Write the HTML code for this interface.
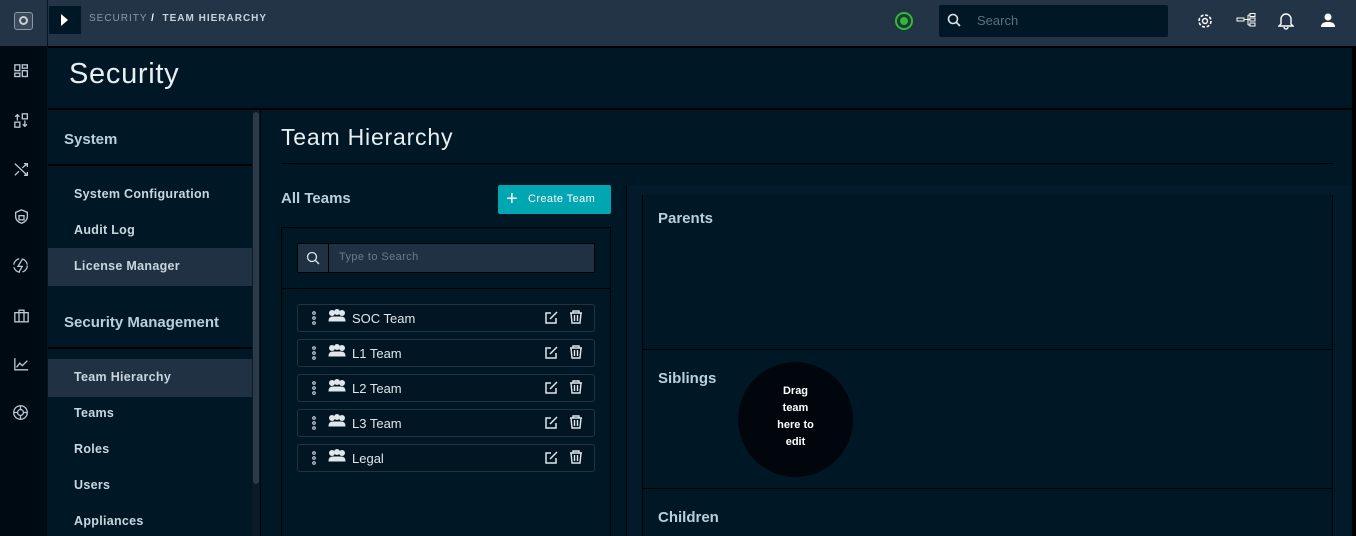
<!DOCTYPE html>
<html><head><style>
*{margin:0;padding:0;box-sizing:border-box}
body{width:1356px;height:536px;overflow:hidden;background:#001826;font-family:"Liberation Sans",sans-serif;position:relative;color:#dfe6ec}
.abs{position:absolute}
.rail{left:0;top:0;width:47px;height:536px;background:#000a12}
.top{left:48px;top:0;width:1308px;height:46px;background:#223446}
.topl{left:0;top:0;width:47px;height:46px;background:#223446}
.nav{left:48px;top:110px;width:204px;height:426px;background:#001826}
.navi{position:absolute;left:26px;font-size:12.5px;font-weight:bold;color:#c9d6e0;letter-spacing:.3px}
.hd{position:absolute;left:16px;font-size:15px;font-weight:bold;color:#b9cfe0}
.sel{position:absolute;left:0;width:204px;height:38px;background:#1f3142}
.row{position:absolute;left:297px;width:298px;height:28px;border:1px solid #22323f;border-radius:3px;background:#021522}
.row span{position:absolute;left:54px;top:6px;font-size:13px;color:#e0e6ea}
.sec{position:absolute;left:658px;font-size:15px;font-weight:bold;color:#b9cfe0}
.ri{position:absolute;left:14px}
</style></head><body>
<div class="abs rail"></div>
<div class="abs topl"></div>
<div class="abs" style="left:14px;top:12px;width:19px;height:18px;border:1.5px solid #8a9aa8;border-radius:3px;background:#3a4a58"><div style="position:absolute;left:3.5px;top:3px;width:9px;height:9px;border:2px solid #c8d0d8;border-radius:50%"></div></div>
<div class="abs top"></div>
<div class="abs" style="left:49px;top:6px;width:32px;height:28px;background:#001826"><div style="position:absolute;left:12px;top:8px;border-left:7px solid #fff;border-top:6px solid transparent;border-bottom:6px solid transparent"></div></div>
<div class="abs" style="left:89px;top:13px;font-size:10px;letter-spacing:1px;color:#8a9aaa">SECURITY <b style="color:#fff">/</b>&nbsp; <b style="color:#c8d2dc">TEAM HIERARCHY</b></div>
<div class="abs" style="left:895px;top:12px;width:18px;height:18px;border:2px solid #2bbd2b;border-radius:50%"><div style="position:absolute;left:3px;top:3px;width:8px;height:8px;background:#2bbd2b;border-radius:50%"></div></div>
<div class="abs" style="left:939px;top:5px;width:229px;height:32px;background:#001826;border-radius:2px"></div>
<svg class="abs" style="left:947px;top:13px" width="14" height="14"><circle cx="6" cy="6" r="4.5" stroke="#dfe6ec" stroke-width="1.6" fill="none"/><path d="M9.5 9.5L13 13" stroke="#dfe6ec" stroke-width="1.6"/></svg>
<div class="abs" style="left:977px;top:13px;font-size:13px;color:#5d6f80">Search</div>
<svg class="abs" style="left:1196px;top:12px" width="18" height="18" viewBox="0 0 18 18"><circle cx="9" cy="9" r="6" stroke="#fff" stroke-width="1.6" fill="none" stroke-dasharray="3 1.7"/><circle cx="9" cy="9" r="2.5" stroke="#fff" stroke-width="1.4" fill="none"/></svg>
<svg class="abs" style="left:1236px;top:13px" width="20" height="14"><rect x="1" y="5" width="7" height="3" fill="none" stroke="#fff"/><path d="M8 6.5h4M12 2v10M12 2h2M12 6.5h2M12 12h2" stroke="#fff"/><rect x="14" y="0.5" width="5" height="3" fill="none" stroke="#fff"/><rect x="14" y="5" width="5" height="3" fill="none" stroke="#fff"/><rect x="14" y="10" width="5" height="3" fill="none" stroke="#fff"/></svg>
<svg class="abs" style="left:1278px;top:11px" width="16" height="19"><path d="M3 13V8a5 5 0 0110 0v5l2 2H1z" fill="none" stroke="#fff" stroke-width="1.4"/><path d="M6 16a2 2 0 004 0" fill="none" stroke="#fff" stroke-width="1.4"/></svg>
<svg class="abs" style="left:1320px;top:12px" width="16" height="16"><circle cx="8" cy="5" r="3.5" fill="#fff"/><path d="M1 15c0-4 3-5 7-5s7 1 7 5z" fill="#fff"/></svg>
<div class="abs" style="left:48px;top:46px;width:1308px;height:2px;background:#000"></div>
<div class="abs" style="left:1352px;top:48px;width:4px;height:488px;background:#000"></div>
<div class="abs" style="left:69px;top:58px;font-size:29px;color:#e8eef2;letter-spacing:.7px">Security</div>
<div class="abs" style="left:48px;top:108px;width:1308px;height:2px;background:#000"></div>
<!-- rail icons -->
<svg class="ri" style="top:64px" width="15" height="15" viewBox="0 0 18 18" fill="none" stroke="#b9c8d6" stroke-width="1.6"><rect x="1" y="1" width="6" height="7"/><rect x="10" y="1" width="6" height="4"/><rect x="1" y="11" width="6" height="4"/><rect x="10" y="8" width="6" height="7"/></svg>
<svg class="ri" style="top:113px" width="15" height="15" viewBox="0 0 18 18" fill="none" stroke="#b9c8d6" stroke-width="1.6"><path d="M4 9V2M1.5 4.5L4 2l2.5 2.5"/><rect x="10" y="1" width="6" height="6"/><rect x="1" y="11" width="6" height="6"/><path d="M13 9v7M10.5 13.5L13 16l2.5-2.5"/></svg>
<svg class="ri" style="top:162px" width="15" height="15" viewBox="0 0 18 18" fill="none" stroke="#b9c8d6" stroke-width="1.6"><path d="M1 2l15 14M1 16l5-5M10 7l6-5M12 2h4v4M16 12v4h-4"/></svg>
<svg class="ri" style="top:209px" width="15" height="15" viewBox="0 0 18 18" fill="none" stroke="#b9c8d6" stroke-width="1.6"><path d="M9 1l7 3v5c0 4-3 7-7 8-4-1-7-4-7-8V4z"/><rect x="6" y="8" width="6" height="5"/></svg>
<svg class="ri" style="left:12px;top:257px" width="17" height="17" viewBox="0 0 20 20" fill="none" stroke="#b9c8d6" stroke-width="1.5"><circle cx="10" cy="10" r="8" stroke-dasharray="10 3"/><path d="M12 3L7 11h5l-4 7" /></svg>
<svg class="ri" style="top:309px" width="15" height="14" viewBox="0 0 18 16" fill="none" stroke="#b9c8d6" stroke-width="1.6"><rect x="1" y="4" width="16" height="11"/><path d="M6 4V1h6v3M6 4v11M12 4v11"/></svg>
<svg class="ri" style="top:357px" width="15" height="14" viewBox="0 0 18 16" fill="none" stroke="#b9c8d6" stroke-width="1.6"><path d="M1 1v14h16M3 12l4-5 3 3 6-6"/></svg>
<svg class="ri" style="left:12px;top:404px" width="17" height="17" viewBox="0 0 20 20" fill="none" stroke="#b9c8d6" stroke-width="1.5"><circle cx="10" cy="10" r="8"/><circle cx="10" cy="10" r="3.5"/><path d="M10 2v4.5M10 13.5V18M2 10h4.5M13.5 10H18"/></svg>
<!-- nav -->
<div class="abs nav">
<div class="hd" style="top:21px">System</div>
<div style="position:absolute;left:0;top:54px;width:204px;height:2px;background:#000"></div>
<div class="navi" style="top:77px">System Configuration</div>
<div class="navi" style="top:113px">Audit Log</div>
<div class="sel" style="top:138px"></div>
<div class="navi" style="top:149px">License Manager</div>
<div class="hd" style="top:204px">Security Management</div>
<div style="position:absolute;left:0;top:237px;width:204px;height:2px;background:#000"></div>
<div class="sel" style="top:249px"></div>
<div class="navi" style="top:260px">Team Hierarchy</div>
<div class="navi" style="top:296px">Teams</div>
<div class="navi" style="top:332px">Roles</div>
<div class="navi" style="top:368px">Users</div>
<div class="navi" style="top:404px">Appliances</div>
</div>
<div class="abs" style="left:252px;top:110px;width:8px;height:426px;background:#0a1a26"></div>
<div class="abs" style="left:253px;top:112px;width:6px;height:372px;background:#2a3a48;border-radius:3px"></div>
<div class="abs" style="left:260px;top:110px;width:1px;height:426px;background:#000"></div>
<!-- content -->
<div class="abs" style="left:281px;top:124px;font-size:23px;color:#e8eef2;letter-spacing:.8px">Team Hierarchy</div>
<div class="abs" style="left:281px;top:163px;width:1052px;height:1px;background:#000"></div>
<div class="abs" style="left:281px;top:190px;font-size:15px;font-weight:bold;color:#b9cfe0">All Teams</div>
<div class="abs" style="left:498px;top:185px;width:113px;height:29px;background:#00a6b1;border-radius:2px"></div>
<div class="abs" style="left:506px;top:189px;font-size:20px;color:#fff;line-height:20px">+</div>
<div class="abs" style="left:528px;top:193px;font-size:11px;color:#fff;letter-spacing:.4px">Create Team</div>
<div class="abs" style="left:281px;top:227px;width:330px;height:309px;border:1px solid #000;border-bottom:none"></div>
<div class="abs" style="left:281px;top:288px;width:330px;height:1px;background:#000"></div>
<div class="abs" style="left:297px;top:243px;width:298px;height:30px;background:#1f3142;border:1px solid #000"></div>
<div class="abs" style="left:328px;top:243px;width:1px;height:30px;background:#000"></div>
<svg class="abs" style="left:306px;top:251px" width="14" height="14"><circle cx="6" cy="6" r="4.5" stroke="#dfe6ec" stroke-width="1.3" fill="none"/><path d="M9.5 9.5L13 13" stroke="#dfe6ec" stroke-width="1.3"/></svg>
<div class="abs" style="left:339px;top:251px;font-size:11px;color:#6b7c8c;letter-spacing:.4px">Type to Search</div>
<div class="row" style="top:304px"><span>SOC Team</span></div>
<div class="row" style="top:339px"><span>L1 Team</span></div>
<div class="row" style="top:374px"><span>L2 Team</span></div>
<div class="row" style="top:409px"><span>L3 Team</span></div>
<div class="row" style="top:444px"><span>Legal</span></div>
<svg class="abs" style="left:309px;top:304px" width="290" height="170">
<defs><g id="r" fill="none" stroke="#dfe6ec">
<circle cx="5" cy="9" r="1.3"/><circle cx="5" cy="14" r="1.3"/><circle cx="5" cy="19" r="1.3"/>
<circle cx="23" cy="9" r="2.5" fill="#dfe6ec"/><circle cx="28" cy="8" r="2.5" fill="#dfe6ec"/><circle cx="33" cy="9" r="2.5" fill="#dfe6ec"/><path d="M20 17c0-3 2-4 4-4h8c2 0 4 1 4 4z" fill="#dfe6ec"/>
<path d="M242 9h-5v10h10v-5M241 15l7-7" stroke-width="1.5"/>
<path d="M261 9h12M264 9V7h6v2M262 9l1 10h8l1-10M265.5 11v6M268.5 11v6" stroke-width="1.4"/>
</g></defs>
<use href="#r" y="0"/><use href="#r" y="35"/><use href="#r" y="70"/><use href="#r" y="105"/><use href="#r" y="140"/>
</svg>
<div class="abs" style="left:626px;top:185px;width:1px;height:351px;background:#000"></div>
<div class="abs" style="left:627px;top:185px;width:723px;height:351px;background:#021a29"></div>
<div class="abs" style="left:642px;top:195px;width:691px;height:341px;background:#001826;border-left:1px solid #000;border-right:1px solid #000"></div>
<div class="abs" style="left:642px;top:349px;width:691px;height:1px;background:#000"></div>
<div class="abs" style="left:642px;top:488px;width:691px;height:1px;background:#000"></div>
<div class="sec" style="top:210px">Parents</div>
<div class="sec" style="top:370px">Siblings</div>
<div class="sec" style="top:509px">Children</div>
<div class="abs" style="left:738px;top:362px;width:115px;height:115px;border-radius:50%;background:#00060c;color:#fff;font-size:11px;font-weight:bold;text-align:center;line-height:17px;padding-top:21px">Drag<br>team<br>here to<br>edit</div>
</body></html>
